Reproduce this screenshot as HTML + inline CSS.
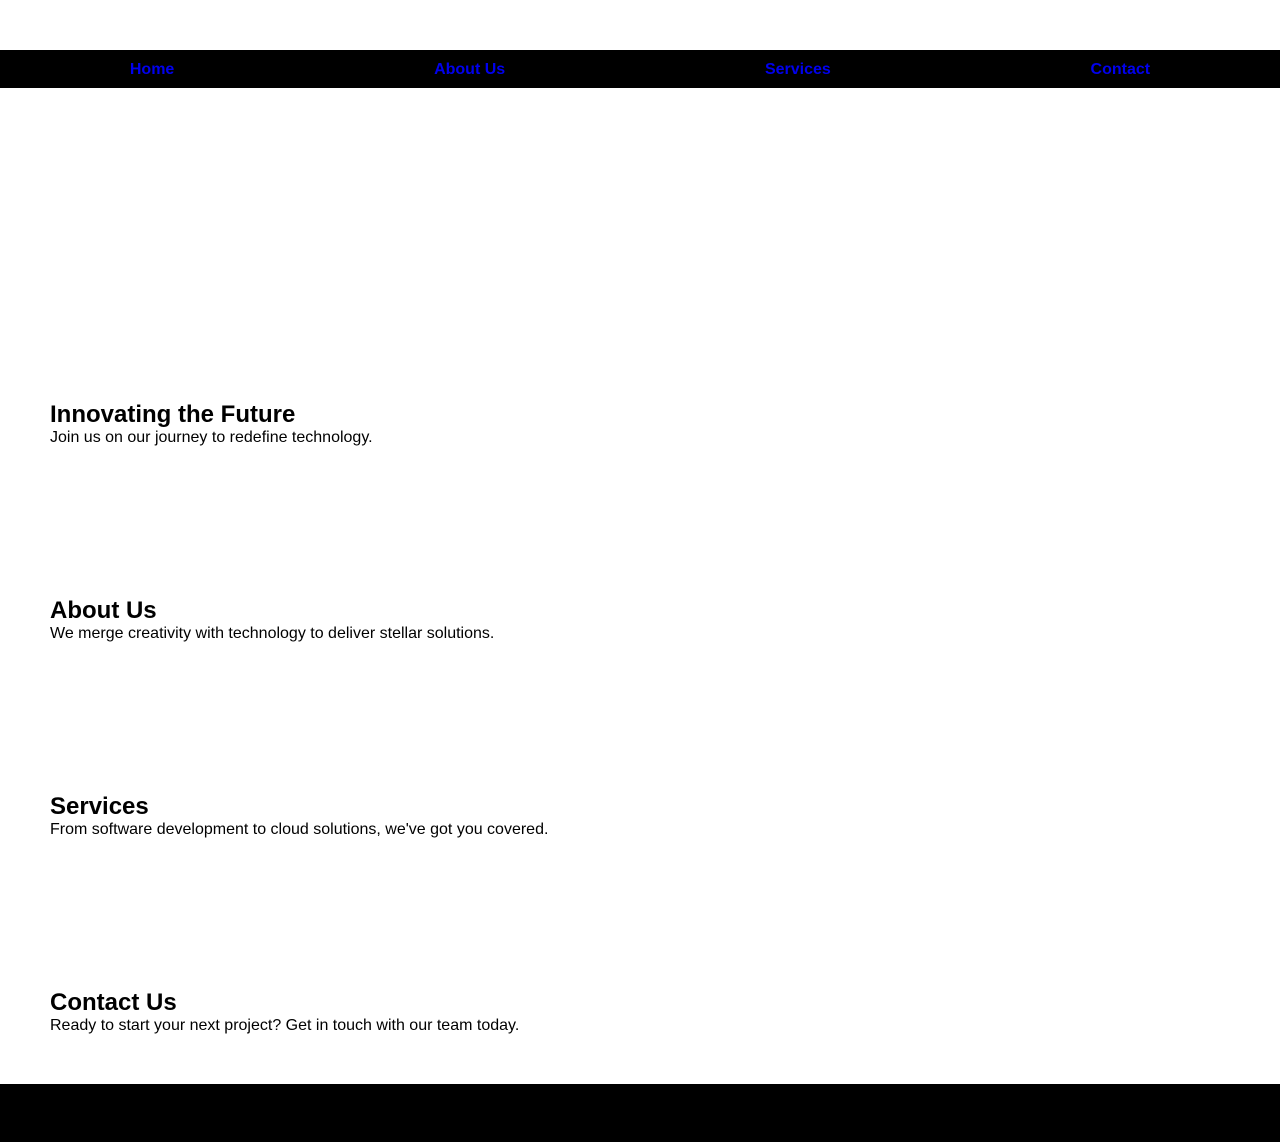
<!DOCTYPE html>
<html><head><style>
*{margin:0;padding:0;box-sizing:border-box}
body{font-family:"Liberation Sans",Arial,sans-serif;background:#fff;width:1280px;height:1142px;position:relative;overflow:hidden}
nav{position:absolute;top:50px;left:0;width:1280px;height:38px;background:#000;display:flex;justify-content:space-around;align-items:center;padding-top:2px}
nav a{color:#0000ee;font-weight:bold;font-size:16px;text-decoration:none}
section{padding:100px 50px 50px}
section.hero{padding-top:313px}
section.last{padding-bottom:49px}
h2{font-size:24px;line-height:27.6px;font-weight:bold}
p{font-size:16px;line-height:18.4px}
main{position:absolute;top:88px;left:0;width:1280px}
footer{position:absolute;top:1084px;left:0;width:1280px;height:58px;background:#000}
</style></head><body>
<nav><a>Home</a><a>About Us</a><a>Services</a><a>Contact</a></nav>
<main>
<section class="hero"><h2>Innovating the Future</h2><p>Join us on our journey to redefine technology.</p></section>
<section><h2>About Us</h2><p>We merge creativity with technology to deliver stellar solutions.</p></section>
<section><h2>Services</h2><p>From software development to cloud solutions, we've got you covered.</p></section>
<section class="last"><h2>Contact Us</h2><p>Ready to start your next project? Get in touch with our team today.</p></section>
</main>
<footer></footer>
</body></html>
